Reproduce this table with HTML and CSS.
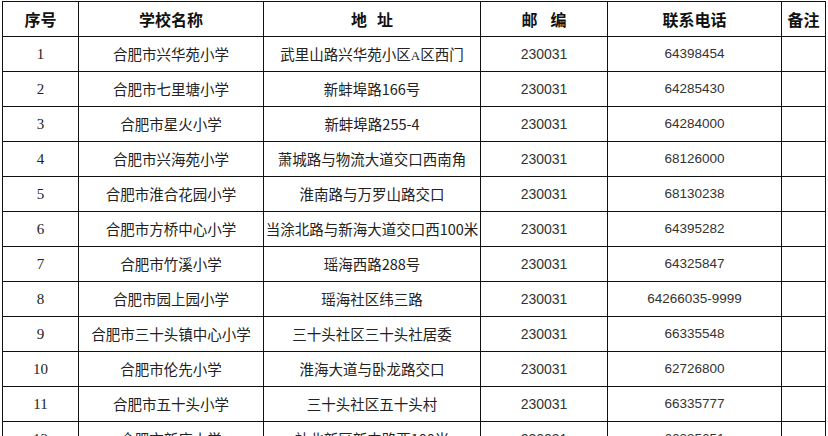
FILE: index.html
```html
<!DOCTYPE html>
<html lang="zh-CN">
<head>
<meta charset="utf-8">
<title>学校列表</title>
<link rel="stylesheet" href="styles.css">
</head>
<body>
<table class="sheet">
  <colgroup>
    <col class="c-no"><col class="c-name"><col class="c-addr"><col class="c-zip"><col class="c-tel"><col class="c-note">
  </colgroup>
  <thead>
    <tr><th>序号</th><th>学校名称</th><th>地<span class="gap"></span>址</th><th>邮<span class="gap wide"></span>编</th><th>联系电话</th><th>备注</th></tr>
  </thead>
  <tbody>
    <tr><td class="no">1</td><td>合肥市兴华苑小学</td><td>武里山路兴华苑小区<span class="lat">A</span>区西门</td><td class="zip">230031</td><td class="tel">64398454</td><td></td></tr>
    <tr><td class="no">2</td><td>合肥市七里塘小学</td><td>新蚌埠路166号</td><td class="zip">230031</td><td class="tel">64285430</td><td></td></tr>
    <tr><td class="no">3</td><td>合肥市星火小学</td><td>新蚌埠路255-4</td><td class="zip">230031</td><td class="tel">64284000</td><td></td></tr>
    <tr><td class="no">4</td><td>合肥市兴海苑小学</td><td>萧城路与物流大道交口西南角</td><td class="zip">230031</td><td class="tel">68126000</td><td></td></tr>
    <tr><td class="no">5</td><td>合肥市淮合花园小学</td><td>淮南路与万罗山路交口</td><td class="zip">230031</td><td class="tel">68130238</td><td></td></tr>
    <tr><td class="no">6</td><td>合肥市方桥中心小学</td><td>当涂北路与新海大道交口西100米</td><td class="zip">230031</td><td class="tel">64395282</td><td></td></tr>
    <tr><td class="no">7</td><td>合肥市竹溪小学</td><td>瑶海西路288号</td><td class="zip">230031</td><td class="tel">64325847</td><td></td></tr>
    <tr><td class="no">8</td><td>合肥市园上园小学</td><td>瑶海社区纬三路</td><td class="zip">230031</td><td class="tel">64266035-9999</td><td></td></tr>
    <tr><td class="no">9</td><td>合肥市三十头镇中心小学</td><td>三十头社区三十头社居委</td><td class="zip">230031</td><td class="tel">66335548</td><td></td></tr>
    <tr><td class="no">10</td><td>合肥市伦先小学</td><td>淮海大道与卧龙路交口</td><td class="zip">230031</td><td class="tel">62726800</td><td></td></tr>
    <tr><td class="no">11</td><td>合肥市五十头小学</td><td>三十头社区五十头村</td><td class="zip">230031</td><td class="tel">66335777</td><td></td></tr>
    <tr><td class="no">12</td><td>合肥市新店小学</td><td>站北新区新丰路西100米</td><td class="zip">230031</td><td class="tel">66335651</td><td></td></tr>
  </tbody>
</table>
</body>
</html>
```

FILE: styles.css
```css
html, body {
  margin: 0;
  padding: 0;
  background: #ffffff;
}

body {
  padding: 1px 0 0 2px;
  font-family: "Noto Sans CJK SC", "Noto Sans", sans-serif;
  color: #222222;
}

.sheet {
  border-collapse: collapse;
  table-layout: fixed;
  width: 823px;
}

.c-no { width: 76px; }
.c-name { width: 185px; }
.c-addr { width: 217px; }
.c-zip { width: 127px; }
.c-tel { width: 174px; }
.c-note { width: 44px; }

.sheet th,
.sheet td {
  border: 1px solid #111111;
  padding: 0;
  text-align: center;
  vertical-align: middle;
  white-space: nowrap;
  overflow: hidden;
}

.sheet th {
  height: 34px;
  font-size: 16px;
  font-weight: 700;
  color: #111111;
}

.gap {
  display: inline-block;
  width: 10px;
}

.gap.wide {
  width: 13px;
}

.sheet td {
  height: 34px;
  font-size: 14.5px;
  line-height: 1;
}

.sheet td.no {
  font-family: "Liberation Serif", serif;
  font-size: 15px;
}

.sheet td.zip {
  font-family: "Liberation Sans", sans-serif;
  font-size: 14px;
  color: #333333;
}

.sheet td.tel {
  font-family: "Liberation Sans", sans-serif;
  font-size: 13.5px;
  color: #333333;
}

.lat {
  font-family: "Liberation Serif", serif;
  font-size: 13px;
}
```
